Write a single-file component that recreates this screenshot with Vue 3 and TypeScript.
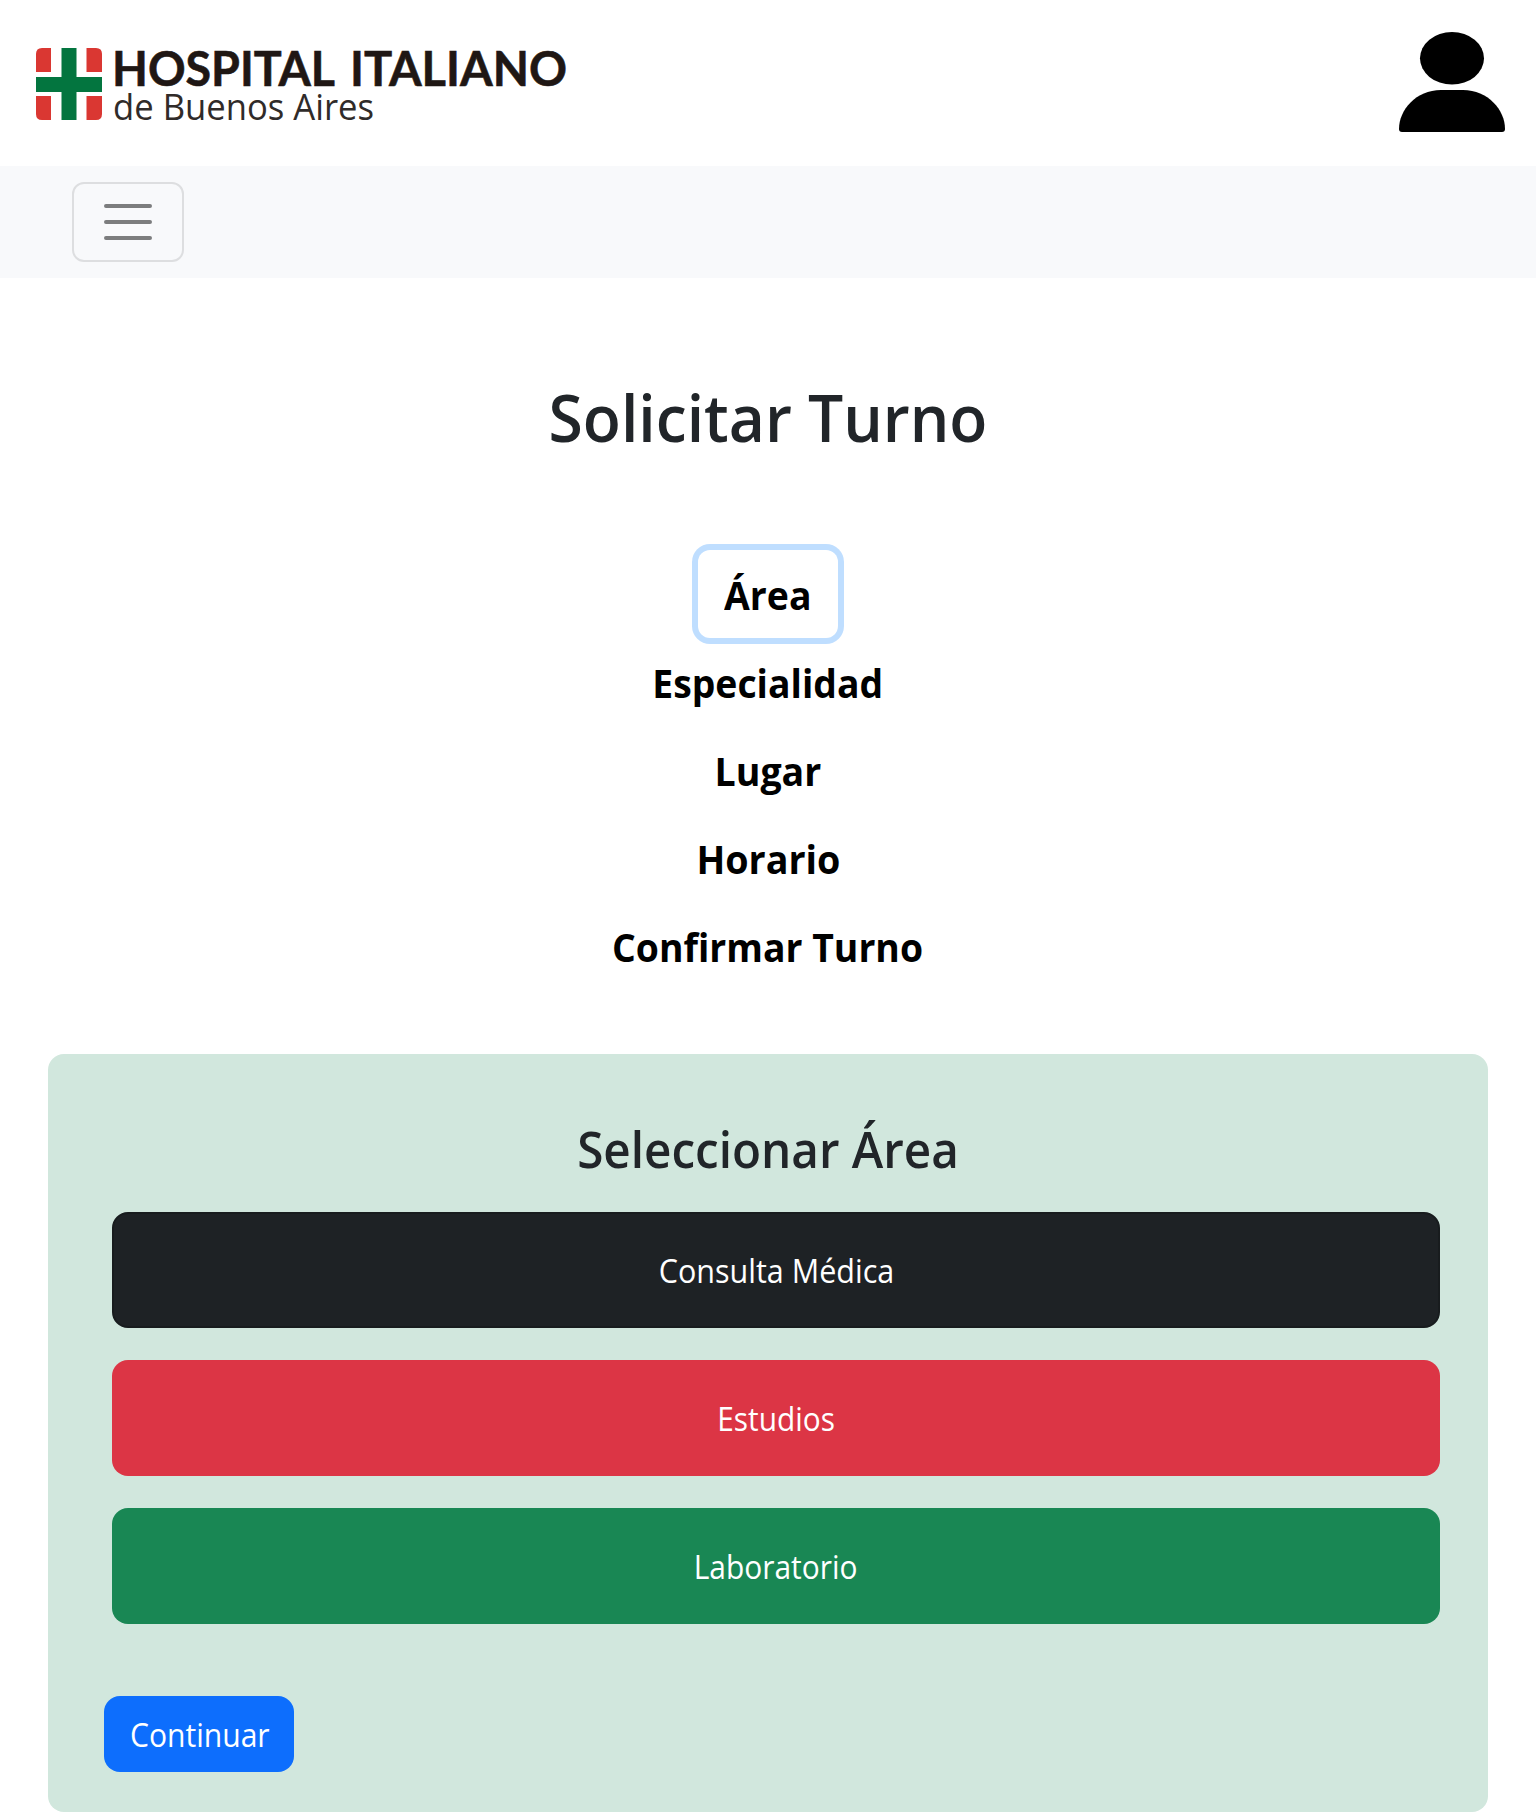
<script setup lang="ts">
import { ref } from 'vue'

interface Item { id: string; label: string; scale: number }

// scale condenses each label horizontally
const steps: Item[] = [
  { id: 'area', label: 'Área', scale: 0.935 },
  { id: 'especialidad', label: 'Especialidad', scale: 0.933 },
  { id: 'lugar', label: 'Lugar', scale: 0.938 },
  { id: 'horario', label: 'Horario', scale: 0.942 },
  { id: 'confirmar', label: 'Confirmar Turno', scale: 0.934 },
]
const areas: Item[] = [
  { id: 'consulta', label: 'Consulta Médica', scale: 0.953 },
  { id: 'estudios', label: 'Estudios', scale: 0.932 },
  { id: 'laboratorio', label: 'Laboratorio', scale: 0.935 },
]
const activeStep = ref('area')
</script>

<template>
  <div class="page">
    <header class="header">
      <svg class="logo" width="560" height="90" viewBox="0 0 560 90" role="img" aria-label="Hospital Italiano de Buenos Aires">
        <g fill="#da3732">
          <path d="M0 24V6Q0 0 6 0H15V24Z" />
          <path d="M50.500 0H60Q66 0 66 6V24H50.500Z" />
          <path d="M0 48H15V72H6Q0 72 0 66Z" />
          <path d="M50.500 48H66V66Q66 72 60 72H50.500Z" />
        </g>
        <path fill="#03753f" d="M25.500 0H40.500V29H66V44H40.500V72H25.500V44H0V29H25.500Z" />
        <text class="logo-main" x="76" y="37.500" textLength="223" lengthAdjust="spacingAndGlyphs">HOSPITAL</text>
        <text class="logo-main" x="314" y="37.500" textLength="217" lengthAdjust="spacingAndGlyphs">ITALIANO</text>
        <text class="logo-sub" x="77" y="72" textLength="261" lengthAdjust="spacingAndGlyphs">de Buenos Aires</text>
      </svg>
      <svg class="avatar" width="106" height="100" viewBox="0 0 106 100" aria-label="Perfil">
        <ellipse cx="53" cy="26.300" rx="32" ry="26.300" />
        <path d="M42 58H64C89 58 106 78 106 97Q106 100 103 100H3Q0 100 0 97C0 78 17 58 42 58Z" />
      </svg>
    </header>

    <nav class="navbar">
      <button class="toggler" type="button" aria-label="Menú">
        <svg width="60" height="60" viewBox="0 0 30 30">
          <path d="M4 7h22M4 15h22M4 23h22" />
        </svg>
      </button>
    </nav>

    <main>
      <h1 class="title">Solicitar Turno</h1>
      <div class="steps">
        <button
          v-for="step in steps"
          :key="step.id"
          type="button"
          :class="['step', { active: activeStep === step.id }]"
          @click="activeStep = step.id"
        ><span class="label" :style="{ transform: `scaleX(${step.scale})` }">{{ step.label }}</span></button>
      </div>

      <section class="panel">
        <h2 class="subtitle">Seleccionar Área</h2>
        <div class="areas">
          <button v-for="area in areas" :key="area.id" type="button" :class="['area', area.id]">
            <span class="label" :style="{ transform: `scaleX(${area.scale})` }">{{ area.label }}</span>
          </button>
        </div>
        <button class="continue" type="button"><span class="label">Continuar</span></button>
      </section>
    </main>
  </div>
</template>

<style>
body { margin: 0; background: #fff; }
</style>

<style scoped>
.page { height: 1812px; overflow: hidden; color: #212529; font-family: "Open Sans", "Noto Sans", sans-serif; }
.page, .page * { box-sizing: border-box; }
button { font-family: inherit; margin: 0; border: 0; cursor: pointer; white-space: nowrap; }
.label { display: inline-block; }
.header { display: flex; justify-content: space-between; align-items: flex-start; height: 166px; padding: 32px 31px 0 36px; }
.logo { margin-top: 16px; overflow: visible; }
.logo-main { font: 700 48.500px Lato, sans-serif; fill: #1f1714; stroke: #1f1714; stroke-width: 0.600px; }
.logo-sub { font: 400 36px "Open Sans", sans-serif; fill: #302b29; }
.navbar { display: flex; align-items: center; height: 112px; padding: 0 72px; background: #f8f9fb; }
.toggler { display: flex; align-items: center; justify-content: center; width: 112px; height: 80px; border: 2px solid #dddee0; border-radius: 12px; background: transparent; }
.toggler path { fill: none; stroke: #7c7d7e; stroke-width: 2; stroke-linecap: round; }
.title { margin: 95px 0 0; height: 88px; line-height: 88px; text-align: center; font-size: 65.500px; font-weight: 600; transform: scaleX(0.952); }
.steps { display: flex; flex-direction: column; align-items: center; margin-top: 89px; }
.step { height: 88px; line-height: 60px; padding: 1px 24px 0; border-radius: 12px; background: transparent; color: #000; font-size: 40px; font-weight: 700; }
.step.active { width: 140px; padding: 1px 0 0; box-shadow: 0 0 0 6px #bfdeff; }
.panel { height: 758px; margin: 64px 48px 0; padding: 64px 48px 0 56px; border-radius: 16px; background: #d1e7dd; }
.subtitle { margin: -1px 8px 0 0; height: 64px; line-height: 64px; text-align: center; font-size: 50px; font-weight: 600; transform: scaleX(0.952); }
.areas { display: flex; flex-direction: column; gap: 32px; margin: 31px 0 0 8px; }
.area { height: 116px; border-radius: 16px; color: #fff; font-size: 32px; }
.consulta { background: #1e2225; border: 2px solid #181c1e; }
.estudios { background: #dc3545; }
.laboratorio { background: #198754; }
.continue { display: block; width: 190px; height: 76px; margin-top: 72px; padding: 0; border-radius: 16px; background: #0d6efd; color: #fff; font-size: 32px; }
.continue .label { transform: translateX(0.500px) scaleX(0.940); }
</style>
